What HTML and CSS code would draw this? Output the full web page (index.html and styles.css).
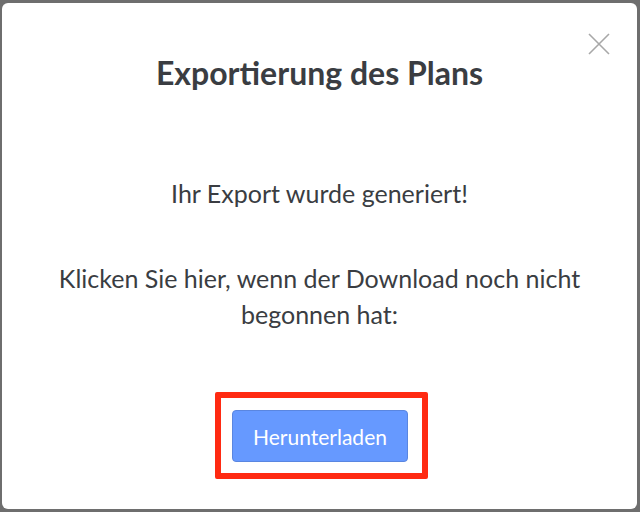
FILE: index.html
```html
<!DOCTYPE html>
<html lang="de">
<head>
<meta charset="utf-8">
<link rel="stylesheet" href="styles.css">
</head>
<body>
<div class="modal">
  <button class="close" aria-label="Schließen">
    <svg width="22" height="22" viewBox="0 0 22 22"><path d="M1 1L21 21M21 1L1 21" stroke="#a8a8a8" stroke-width="1.6" fill="none"/></svg>
  </button>
  <h1 class="title">Exportierung des Plans</h1>
  <p class="msg first">Ihr Export wurde generiert!</p>
  <p class="msg">Klicken Sie hier, wenn der Download noch nicht begonnen hat:</p>
  <div class="highlight">
    <button class="download">Herunterladen</button>
  </div>
</div>
</body>
</html>
```
FILE: styles.css
```css
html, body {
  margin: 0;
  padding: 0;
  width: 640px;
  height: 512px;
  background: #6e6e6e;
  overflow: hidden;
}
body {
  padding: 3px 3px 3px 2px;
  box-sizing: border-box;
  font-family: Lato, "Open Sans", sans-serif;
  color: #3a3d42;
}
.modal {
  position: relative;
  background: #fff;
  height: 506px;
  border-radius: 6px;
  display: flex;
  flex-direction: column;
  align-items: center;
  box-sizing: border-box;
  padding-top: 50px;
}
.close {
  position: absolute;
  top: 30px;
  right: 27px;
  background: none;
  border: 0;
  padding: 0;
  width: 22px;
  height: 22px;
}
.title {
  margin: 0;
  font-size: 32px;
  font-weight: 700;
  line-height: 40px;
  color: #3a3d42;
}
.msg {
  margin: 0;
  font-size: 25px;
  line-height: 36px;
  text-align: center;
  width: 560px;
}
.msg.first {
  margin-top: 82px;
  margin-bottom: 49px;
}
.highlight {
  margin-top: 60px;
  margin-left: 4px;
  border: 6px solid #ff2a12;
  border-radius: 2px;
  padding: 12px 14px 11px 11px;
}
.download {
  display: block;
  width: 176px;
  height: 52px;
  background: #6699ff;
  border: 1px solid #5a86e0;
  border-radius: 4px;
  color: #fff;
  font-family: Lato, sans-serif;
  font-size: 21px;
  padding: 0;
}
```
